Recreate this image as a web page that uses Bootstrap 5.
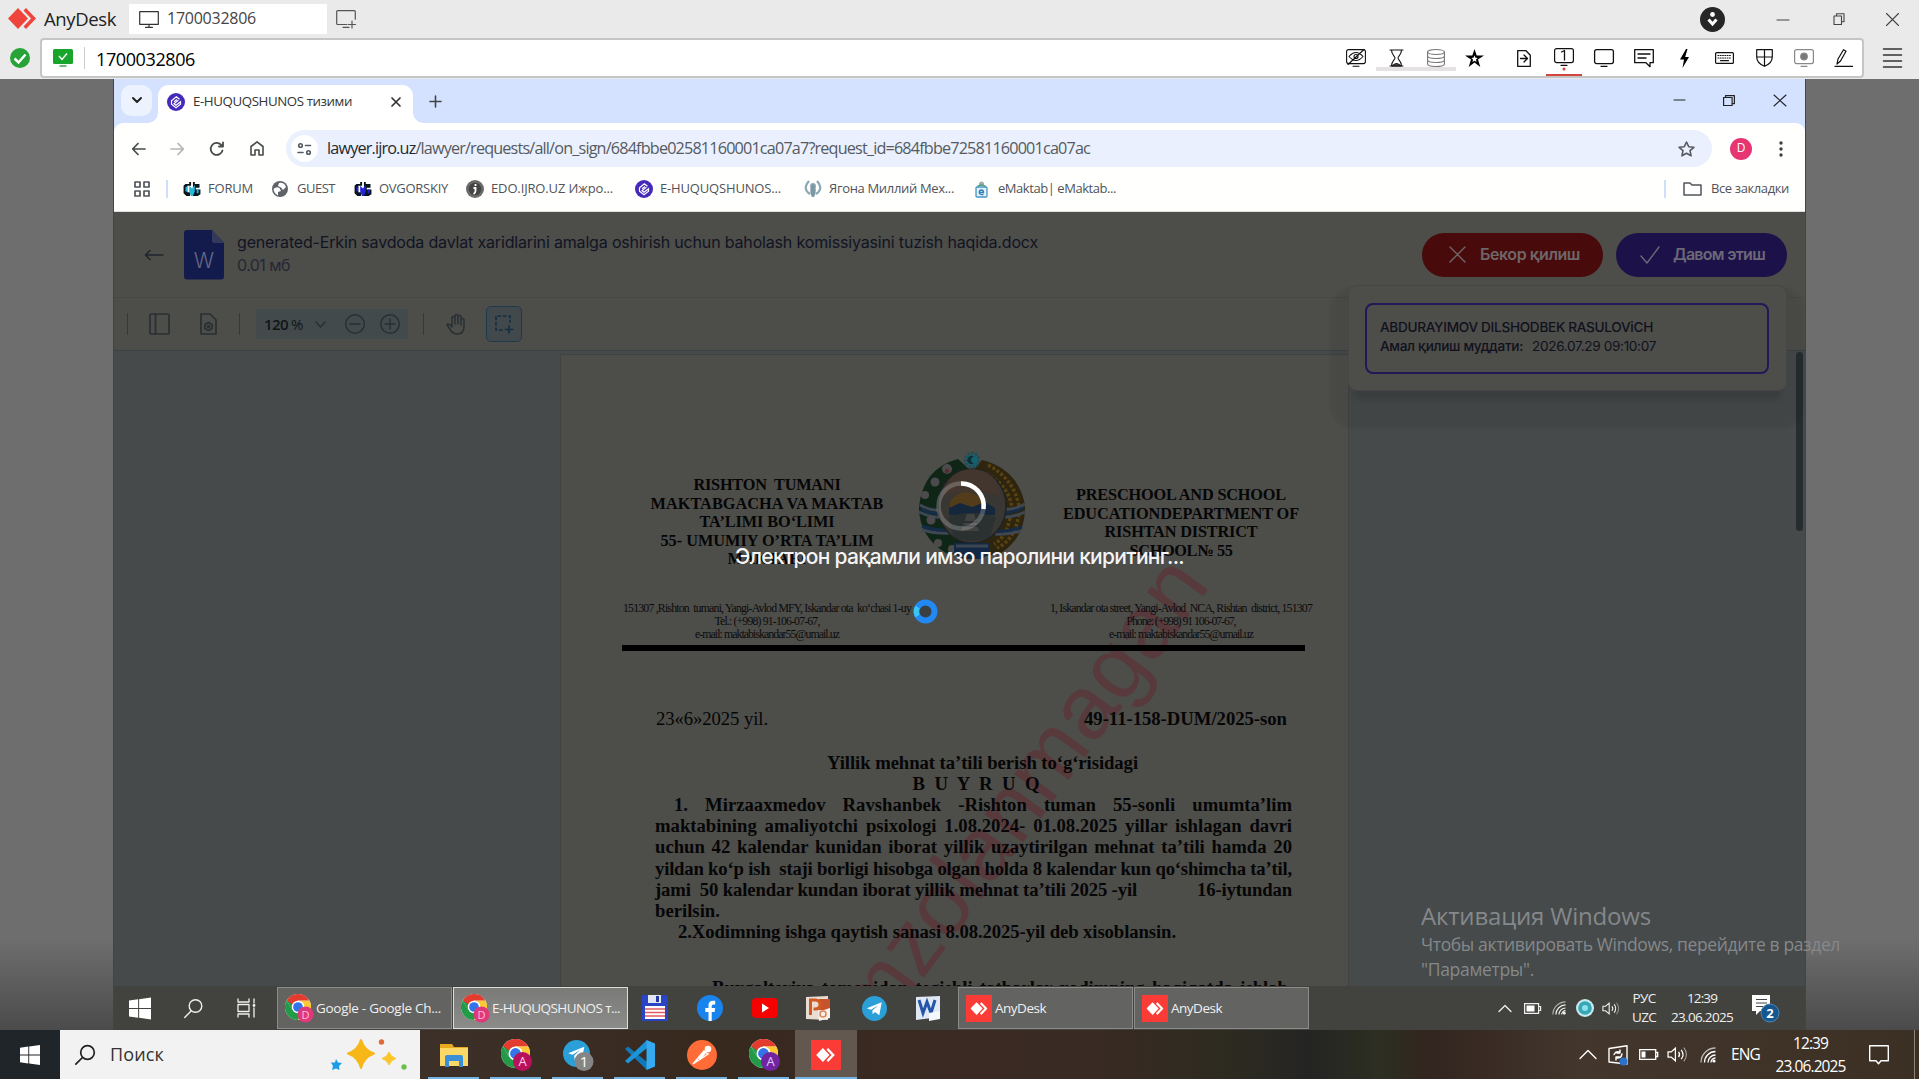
<!DOCTYPE html>
<html lang="ru">
<head>
<meta charset="utf-8">
<meta name="viewport" content="width=device-width, initial-scale=1">
<title>AnyDesk – 1700032806</title>
<link href="https://cdn.jsdelivr.net/npm/bootstrap@5.3.0/dist/css/bootstrap.min.css" rel="stylesheet">
<style>
html,body{height:100%;overflow:hidden}
body{font-family:"Open Sans","Noto Sans",sans-serif;background:#6e6e6e;color:#222;line-height:1.2}
svg{display:block;flex:none;overflow:visible}
.ln{fill:none;stroke:currentColor;stroke-linecap:round;stroke-linejoin:round}
[data-w]{white-space:pre;display:inline-block;flex:none}
.slot{display:flex;align-items:center;justify-content:center;flex:none}
/* AnyDesk window */
.ad-title{height:38px;background:#eaeaea}
.ad-name{font-size:18.5px;font-weight:500;color:#222}
.ad-tab{width:198px;height:30px;margin-left:13px;background:#fff;font-size:16px;color:#444}
.ad-bar{height:41px;background:#eaeaea;padding-bottom:1px}
.ad-field{width:1824px;height:40px;background:#fff;border:2px solid #c4c5c7;border-radius:4px}
.ad-id{font-size:18px;color:#000}
.ad-field .slot{width:40px;height:38px;position:relative;color:#111}
.vline{width:1px;flex:none}
.busy-strip::after{content:"";position:absolute;left:0;right:0;top:28px;height:4px;background:#e6e2e4}
.on-strip::after{content:"";position:absolute;left:2px;right:2px;bottom:1px;height:2px;background:#d3453d}
/* remote screen */
.stage{height:951px;background:linear-gradient(#6e6e6e 0,#6e6e6e 860px,#4b4b4b 951px)}
.remote{width:1693px;margin-left:113px;height:951px;border-left:1px solid #444;border-right:1px solid #444;position:relative;overflow:hidden}
.tabstrip{height:44px;background:#d5e2ff;padding:6px 0 0 7px}
.tab-drop{width:31px;height:31px;border-radius:10px;background:#ecf2fe}
.tab-page{width:255px;height:38px;border-radius:11px 11px 0 0;background:#fff;margin-left:6px;padding-left:9px;font-size:13.300px;color:#333;position:relative}
.tab-page::after,.tab-page::before{content:"";position:absolute;bottom:0;width:10px;height:10px}
.tab-page::after{right:-10px;background:radial-gradient(circle at 100% 0,transparent 9.5px,#fff 10px)}
.tab-page::before{left:-10px;background:radial-gradient(circle at 0 0,transparent 9.5px,#fff 10px)}
.chrome-wrap{background:#d5e2ff}
.chrome-top{background:#fffffd;border-radius:9px 9px 0 0;height:89px;color:#474b4c;border-bottom:1px solid #ddd}
.nav-row{height:51px;padding-left:4px}
.omni{width:1426px;height:37px;border-radius:19px;background:#ebf0fe;padding-left:5px;font-size:16.200px;color:#555b60}
.omni b{font-weight:400;color:#25292c}
.site-info{width:27px;height:27px;border-radius:50%;background:#fff}
.avatar-d{width:22px;height:22px;border-radius:50%;background:#e73574;color:#fff;font-size:12px}
.bm-row{height:30px;font-size:13px;color:#50545a;gap:19px}
.bm-row .bm-wide{width:151px}
.bm-ic{width:25px}
/* dimmed page */
.pagehead{height:86px;background:#4d4d4a;border-bottom:1px solid #474744;font-family:Inter,sans-serif}
.file-name{font-size:16px;color:#111422}
.file-size{font-size:16px;color:#252834}
.pill{height:44px;border-radius:22px;font-size:16px;font-weight:600;color:#6e6669}
.pill-no{width:181px;background:#480a0b;margin-right:13px;padding-left:27px}
.pill-ok{width:171px;background:#1c1148;margin-right:18px;padding-left:25px;color:#6c6878}
.ptools{height:53px;background:#4d4d4a;border-bottom:1px solid #3f4242;color:#283034;font-family:"Open Sans",sans-serif}
.ptools .vline{height:22px;background:#373a3a}
.zoombox{width:152px;height:30px;background:#434a4c;margin-left:16px;border-radius:3px;font-size:15px}
.zoombox span{color:#101518}
.sel-on{width:36px;height:36px;background:#41494d;border:1px solid #1d3a4e;border-radius:5px;color:#142e40}
.viewer{height:635px;background:#464a4b;overflow:hidden;position:relative}
.sheet{width:789px;height:1113px;margin:3px 0 0 446px;background:#4d4d4a;border:solid #414343;border-width:1px 1px 0;padding:121px 0 0 61px;font-family:"Liberation Serif",serif;color:#060606;position:relative}
.viewer .thumb{position:absolute;right:2px;top:1px;width:7px;height:179px;border-radius:4px;background:#262d2f}
.wmark{position:absolute;left:451px;top:450px;transform:translate(-50%,-50%) rotate(-53.8deg);font:90px/1 "Liberation Sans",sans-serif;color:#6a1e2a;opacity:.4;white-space:nowrap}
.lh-l{width:290px}.lh-m{width:120px}.lh-r{width:298px}
.lh{font-size:16.300px;line-height:18.500px;font-weight:700;height:126px}
.adr{font-size:11.800px;line-height:12.800px;color:#0c0c0c}
.bar-line{width:683px;height:6px;background:#000;margin:5px 0 57px}
.txt{width:637px;margin-left:33px;font-size:18.700px;line-height:21.200px}
.jl{text-align:justify;text-align-last:justify;height:21.200px;white-space:nowrap}
.certs{position:absolute;left:1234px;top:206px;width:439px;height:106px;background:#4d4d4a;border:1px solid #464648;border-radius:9px;padding:17px 16px;font-family:Inter,sans-serif;box-shadow:0 14px 5px -6px rgba(0,0,0,.12),0 20px 3px 18px rgba(0,0,0,.055)}
.cert{width:404px;height:71px;border:2px solid #211858;border-radius:8px;padding:13px 13px;font-size:13.600px;line-height:19px;color:#10111c;font-weight:500}
.busy{position:absolute;left:0;right:0;top:402px;font:500 21px/28px Inter,sans-serif;color:#fff}
.busy svg{margin-left:3px}
.ptr{position:absolute;left:799px;top:520px}
.winact{position:absolute;left:1421px;top:900px;color:#85888a;font-size:17.500px;line-height:25px}
.winact .big{font-size:24px;line-height:32px}
/* taskbars */
.rtask{height:44px;background:#42423f;color:#f0f0f0;font-size:13.500px}
.tbtn{height:42px;border:1px solid #8b8b89;background:#636361;padding-left:7px}
.tbtn.cur{background:linear-gradient(#7a7a78,#8b8b89);border-color:#dcdcda}
.htask{height:49px;background:linear-gradient(90deg,#3c3028 420px,#38291f 700px,#3a2a24 1080px,#2d2b20 1230px,#242423 1310px,#2c2f21 1380px,#33251f 1430px,#43362d 1580px,#3c3024 1919px);color:#fff;font-size:15.500px}
.hstart{width:60px;height:49px;background:#20252a}
.hsearch{width:360px;height:49px;background:#f2f2f2;color:#333;font-size:18px;padding-left:15px}
.hitem{width:62px;height:49px;position:relative}
.hitem::after{content:"";position:absolute;left:5px;right:6px;bottom:0;height:2px;background:#76b4e4}
.hitem.cur{background:#63584f}.hitem.cur::after{left:0;right:0}
</style>
<script src="https://cdn.jsdelivr.net/npm/bootstrap@5.3.0/dist/js/bootstrap.bundle.min.js"></script>
</head>
<body>
<svg width="0" height="0" class="position-absolute">
<defs>
<symbol id="adlogo" viewBox="0 0 28 21"><path d="M10 0l10 10.500-10 10.500L0 10.500z"/><path d="M15.500 2.500L18 0l10 10.500L18 21l-2.500-2.500 7.600-8z"/></symbol>
<symbol id="win" viewBox="0 0 20 20"><path d="M0 2.800L8.300 1.600v8H0zM9.200 1.500L20 0v9.600H9.200zM0 10.400h8.300v8L0 17.200zM9.200 10.400H20V20L9.200 18.500z"/></symbol>
<symbol id="chrome" viewBox="0 0 30 30"><circle cx="15" cy="15" r="15" fill="#fff"/><path d="M2 7.500A15 15 0 0 0 15 30l6.500-11.500H8.500z" fill="#229a48"/><path d="M28 7.500A15 15 0 0 1 15 30l6.500-11.200V11L15 7.500z" fill="#fcc934"/><path d="M2 7.500l6.500 11.200L15 8z" fill="#229a48"/><path d="M2 7.500A15 15 0 0 1 28 7.500H15L8.600 12z" fill="#e33b2e"/><circle cx="15" cy="15" r="7.200" fill="#fff"/><circle cx="15" cy="15" r="5.600" fill="#3574e8"/></symbol>
<symbol id="tg" viewBox="0 0 26 26"><circle cx="13" cy="13" r="13" fill="#2a9fd8"/><path d="M5 12.800L20.500 6.500 18 20l-4.500-3.300-2.400 2.300-.3-4 6-5.500-7.500 4.700z" fill="#fff"/></symbol>
<symbol id="wifi" viewBox="0 0 16 16"><g fill="none" stroke="currentColor" stroke-width="1.300"><path d="M1 15.500A14.500 14.500 0 0 1 15.500 1" opacity=".65"/><path d="M4.500 15.500a11 11 0 0 1 11-11M8 15.500a7.500 7.500 0 0 1 7.500-7.500M11 15.500a4.500 4.500 0 0 1 4.500-4.500"/></g><circle cx="14" cy="14" r="1.600" fill="currentColor"/></symbol>
<symbol id="snd" viewBox="0 0 20 16"><path d="M1 5.500h3L8 2v12l-4-3.500H1zM11 5.500q2 2.500 0 5M13.500 3.500q3.500 4.500 0 9" fill="none" stroke="currentColor" stroke-width="1.200"/><path d="M16 1.500q5 6.500 0 13" fill="none" stroke="currentColor" opacity=".55"/></symbol>
<symbol id="ehuq" viewBox="0 0 18 18"><circle cx="9" cy="9" r="9" fill="#4429ba"/><path d="M12.500 6.300L9.300 3.800 4.500 7.700v3.600L9 14.700l4.500-3.600V8.800L9 12.300 7 10.700l4.500-3.600M7 8.700l3-2.300" fill="none" stroke="#fff" stroke-width="1.200"/></symbol>
<symbol id="cyb" viewBox="0 0 18 16"><path d="M2 2h4V0h2v4H4v7h3v4H3l-3-3V4zM10 0h2v2h5v4h-4v2h5v5l-3 2h-5z" fill="#06141c"/><path d="M6 4l3 3 3-4v7l-2 5H8l-2-5zM14 8h2v4h-2zM2 5h2v5H2z" fill="currentColor"/></symbol>
</defs>
</svg>

<header class="ad-title d-flex align-items-center">
  <svg width="28" height="21" fill="#ef443b" style="margin-left:8px;margin-right:8px;margin-bottom:1px"><use href="#adlogo"/></svg>
  <span class="ad-name" data-w="72">AnyDesk</span>
  <div class="ad-tab d-flex align-items-center">
    <svg class="ln ms-2 me-2" style="padding-left:2px;box-sizing:content-box" width="20" height="17" viewBox="0 0 20 17" stroke-width="1.200" color="#333"><path d="M.7.700h18.600v12.600H.7zM10 13.500v2.500M6.500 16.300h7"/></svg>
    <span data-w="89">1700032806</span>
  </div>
  <svg class="ln" style="margin-left:9px" width="21" height="19" viewBox="0 0 21 19" stroke-width="1.200" color="#555"><path d="M11 14.500H1.700a1 1 0 0 1-1-1V1.700a1 1 0 0 1 1-1h16.600a1 1 0 0 1 1 1v7.500M7 17.300h6M16 11v7M12.500 14.500h7"/></svg>
  <div class="ms-auto d-flex align-items-center" style="padding-right:20px">
    <svg width="25" height="25" viewBox="0 0 25 25"><circle cx="12.500" cy="12.500" r="12.500" fill="#262626"/><circle cx="12.500" cy="7.500" r="2.400" fill="#fff"/><path d="M8.500 12.500l4 4.500 4-4.500" fill="none" stroke="#fff" stroke-width="3"/></svg>
    <svg class="ln" style="margin-left:52px" width="12" height="12" stroke-width="1.200" color="#444"><path d="M0 7h12"/></svg>
    <svg class="ln" style="margin-left:44px" width="12" height="12" stroke-width="1.100" color="#444"><path d="M1 3h7.500v8.500H1zM3.500 3V.7H11v8H8.500"/></svg>
    <svg class="ln" style="margin-left:41px" width="13" height="13" stroke-width="1.100" color="#444"><path d="M.5.500l12 12M12.500.500l-12 12"/></svg>
  </div>
</header>

<div class="ad-bar d-flex align-items-center">
  <div class="slot" style="width:40px"><svg width="20" height="20" viewBox="0 0 20 20"><circle cx="10" cy="10" r="10" fill="#27a338"/><path d="M4.500 10.500l4 4 7-8" fill="none" stroke="#fff" stroke-width="2.500"/></svg></div>
  <div class="ad-field d-flex align-items-center">
    <svg style="margin-left:11px" width="20" height="18" viewBox="0 0 20 18"><rect width="20" height="15" rx="1.500" fill="#17a62b"/><path d="M6 7l3 3.500 5-6" fill="none" stroke="#fff" stroke-width="1.400"/><path d="M6.500 17h7" stroke="#3aa548" stroke-width="1.500"/></svg>
    <span class="vline" style="height:22px;background:#ccc;margin:0 11px"></span>
    <span class="ad-id pt-1" data-w="99">1700032806</span>
    <div class="ms-auto d-flex" style="margin-right:-2px">
      <div class="slot"><svg class="ln" width="20" height="18" stroke-width="1.100"><rect x=".6" y=".6" width="18.800" height="14" rx="2"/><path d="M7 17.300h6M3 7.500q7-8 14 0-7 8-14 0zM2 15.500L18 .5"/><circle cx="10" cy="7.500" r="2"/></svg></div>
      <div class="slot busy-strip"><svg class="ln" width="13" height="18" stroke-width="1.100" style="z-index:1"><path d="M0 1h13M0 17h13M1.500 1c0 5 3.500 6 3.500 8s-3.500 3-3.500 8M11.500 1C11.500 6 8 7 8 9s3.500 3 3.500 8"/><path d="M2 17q4.500-5 9 0z" fill="#444"/></svg></div>
      <div class="slot busy-strip" style="color:#777"><svg class="ln" width="18" height="18" stroke-width="1.100" style="z-index:1"><ellipse cx="9" cy="3" rx="8.400" ry="2.500"/><path d="M.6 3v12c0 3.300 16.800 3.300 16.800 0V3M.6 7c0 3.300 16.800 3.300 16.800 0M.6 11c0 3.300 16.800 3.300 16.800 0"/></svg></div>
      <div class="slot" style="width:36px"><svg width="19" height="18" viewBox="0 0 19 18"><path d="M9.500 0l2.200 6.500H19l-6 4 2.300 7.500-5.800-4.500L3.700 18 6 10.500l-6-4h7.300z" fill="#000"/><path d="M9.500 6.500l1 2.300 2.200.2-1.700 1.600.5 2.300-2-1.200-2 1.200.5-2.300L6.300 9l2.200-.2z" fill="#fff"/></svg></div>
      <div class="slot" style="width:52px;padding-left:12px"><svg class="ln" width="14" height="17" stroke-width="1.300"><path d="M.7.700H9l4.300 4.600v11H.7zM3.500 8.500H10M7 5l3.500 3.500L7 12"/></svg></div>
      <div class="slot on-strip"><svg width="20" height="24" viewBox="0 -1 20 24"><rect x=".6" y="1.600" width="18.800" height="14" rx="2" class="ln" stroke-width="1.200"/><path d="M7.500 5l3-1.500V13M7 18.300h6" class="ln" stroke-width="1.300"/><circle cx="10" cy="22" r="1.500" fill="#d3453d"/></svg></div>
      <div class="slot"><svg class="ln" width="20" height="18" stroke-width="1.300"><rect x=".6" y=".6" width="18.800" height="14" rx="2"/><path d="M7 17.300h6"/></svg></div>
      <div class="slot"><svg class="ln" width="20" height="18" stroke-width="1.300"><path d="M.7.700h18.600v13H16v4l-4-4H.7zM4 5h12M4 9h8"/></svg></div>
      <div class="slot"><svg width="11" height="19" viewBox="0 0 11 19"><path d="M7 0L1 10.500h4L3.500 19 10 8H6.200L8.500 0z"/></svg></div>
      <div class="slot"><svg class="ln" width="19" height="12" stroke-width="1.200"><rect x=".6" y=".6" width="17.800" height="10.800" rx="1"/><path d="M3 3.500h13M3 6h13" stroke-dasharray=".8 1.500" /><path d="M5.500 8.700h8"/></svg></div>
      <div class="slot"><svg class="ln" width="17" height="18" stroke-width="1.200"><path d="M.7.700h15.600v7c0 5-4 8-7.800 9.600C4.700 15.700.7 12.700.7 7.700zM8.500.7v16.600M.7 8h15.600"/></svg></div>
      <div class="slot" style="color:#888"><svg class="ln" width="20" height="18" stroke-width="1.200"><rect x=".6" y=".6" width="18.800" height="14" rx="2"/><circle cx="10" cy="7.500" r="3.300" fill="#777"/><path d="M7 17.300h6"/></svg></div>
      <div class="slot"><svg class="ln" width="18" height="18" stroke-width="1.200"><path d="M0 17.400h17.500"/><path d="M2 15l1-5L8.500.700l2.500 1.600L5.500 12z"/></svg></div>
    </div>
  </div>
  <svg class="ln" style="margin-left:19px" width="19" height="20" stroke-width="1.500" color="#333"><path d="M.5 1h18M.5 7h18M.5 13h18M.5 19h18"/></svg>
</div>

<div class="stage">
<div class="remote">
  <div class="tabstrip d-flex">
    <div class="tab-drop slot"><svg class="ln" width="8" height="5" stroke-width="2" color="#222"><path d="M0 0l4 4 4-4"/></svg></div>
    <div class="tab-page d-flex align-items-center pb-1">
      <svg width="18" height="18"><use href="#ehuq"/></svg>
      <span style="margin-left:8px" data-w="159">E-HUQUQSHUNOS тизими</span>
      <svg class="ln" style="margin-left:40px" width="8" height="8" stroke-width="1.700"><path d="M0 0l8 8M8 0L0 8"/></svg>
    </div>
    <svg class="ln" style="margin:11px 0 0 17px" width="11" height="11" stroke-width="1.600" color="#444"><path d="M5.500 0v11M0 5.500h11"/></svg>
    <div class="d-flex ms-auto" style="padding:10px 19px 0 0;color:#222">
      <svg class="ln" style="margin-right:38px" width="11" height="11" stroke-width="1.100"><path d="M0 5h11"/></svg>
      <svg class="ln" style="margin-right:39px" width="12" height="11" stroke-width="1.200"><path d="M.6 2.500h8.500v8H.6zM2.500 2.500V.6h8.900v8H9"/></svg>
      <svg class="ln" width="12" height="11" stroke-width="1.100"><path d="M0 0l12 11M12 0L0 11"/></svg>
    </div>
  </div>
  <div class="chrome-wrap"><div class="chrome-top">
    <div class="nav-row d-flex align-items-center">
      <div class="slot" style="width:40px"><svg class="ln" width="13" height="12" stroke-width="1.700"><path d="M13 6H1M6 .5L.7 6 6 11.500"/></svg></div>
      <div class="slot" style="width:39px;color:#b3b6b8"><svg class="ln" width="13" height="12" stroke-width="1.700"><path d="M0 6h12M7 .5L12.300 6 7 11.500"/></svg></div>
      <div class="slot" style="width:40px"><svg class="ln" width="14" height="14" stroke-width="1.800"><path d="M12.500 8.500A6 6 0 1 1 11 2.700L13 4.500M13 .5v4H9"/></svg></div>
      <div class="slot" style="width:40px"><svg class="ln" width="14" height="15" stroke-width="1.600"><path d="M1 5.500L7 .9l6 4.600V14H9V9H5v5H1z"/></svg></div>
      <div class="omni d-flex align-items-center" style="margin-left:9px">
        <div class="site-info slot"><svg class="ln" width="13" height="12" stroke-width="1.600"><circle cx="2.500" cy="2.500" r="1.800"/><path d="M7.500 2.500h5M0 9.500h5"/><circle cx="10.500" cy="9.500" r="1.800"/></svg></div>
        <span style="margin-left:9px" data-w="763"><b>lawyer.ijro.uz</b>/lawyer/requests/all/on_sign/684fbbe02581160001ca07a7?request_id=684fbbe72581160001ca07ac</span>
        <svg class="ln ms-auto" style="margin-right:17px" width="17" height="16" viewBox="0 0 17 16" stroke-width="1.600"><path d="M8.500 1l2.200 4.700 5.200.6-3.900 3.400 1.100 5.100-4.600-2.600-4.600 2.600L5 9.700 1.100 6.300l5.200-.6z"/></svg>
      </div>
      <div class="avatar-d slot" style="margin-left:18px">D</div>
      <svg style="margin-left:27px" width="4" height="18" fill="#3c4043"><circle cx="2" cy="3" r="1.700"/><circle cx="2" cy="9" r="1.700"/><circle cx="2" cy="15" r="1.700"/></svg>
    </div>
    <div class="bm-row d-flex align-items-center">
      <div class="d-flex align-items-center" style="margin-left:20px;width:31px;margin-right:-1px">
        <svg class="ln" width="16" height="16" stroke-width="1.700"><path d="M1 1h5v5H1zM10 1h5v5h-5zM1 10h5v5H1zM10 10h5v5h-5z"/></svg>
        <span class="vline ms-auto" style="width:2px;margin-right:-3px;height:18px;background:#cfdffa"></span>
      </div>
      <div class="d-flex align-items-center"><span class="bm-ic"><svg width="18" height="15" color="#25b8dc"><use href="#cyb"/></svg></span><span data-w="45">FORUM</span></div>
      <div class="d-flex align-items-center"><span class="bm-ic"><svg width="16" height="16"><circle cx="8" cy="8" r="8" fill="#5f6368"/><path d="M1.500 8q3-3 6-1l1.500 3-3 1v3.500Q2 12.500 1.500 8zM7 2q5-1 7 4l-3 3-2-2.500L6 5z" fill="#fff"/></svg></span><span data-w="38">GUEST</span></div>
      <div class="d-flex align-items-center"><span class="bm-ic"><svg width="18" height="15" color="#2422d8"><use href="#cyb"/></svg></span><span data-w="69">OVGORSKIY</span></div>
      <div class="d-flex align-items-center bm-wide" style="margin-left:-1px"><span class="bm-ic"><svg width="18" height="18"><circle cx="9" cy="9" r="9" fill="#6a6a6a"/><circle cx="9" cy="9" r="6.300" fill="#444"/><path d="M9.500 4v2M7.500 8H9.500v3q0 2-2 3" stroke="#fff" stroke-width="1.800" fill="none"/></svg></span><span data-w="122">EDO.IJRO.UZ Ижро...</span></div>
      <div class="d-flex align-items-center bm-wide" style="margin-left:-1px"><span class="bm-ic"><svg width="18" height="18"><use href="#ehuq"/></svg></span><span data-w="121">E-HUQUQSHUNOS...</span></div>
      <div class="d-flex align-items-center bm-wide"><span class="bm-ic" style="width:24px"><svg width="16" height="18"><path d="M4 1Q-3 9 5 14M12 1q7 8-1 13" fill="none" stroke="#88a8b4" stroke-width="2.200"/><circle cx="8" cy="6" r="3" fill="#9ab"/><path d="M8 3q5 7 1 14H7Q3 10 8 3z" fill="#7d98a5"/></svg></span><span data-w="125">Ягона Миллий Мех...</span></div>
      <div class="d-flex align-items-center"><span class="bm-ic" style="width:23px"><svg width="13" height="17"><rect x="1" y="6" width="11" height="10" rx="1" fill="#e2f1fa" stroke="#4895c6" stroke-width="1.300"/><circle cx="6.500" cy="3" r="2.500" fill="#9fb0a0"/><path d="M2.500 5.500q4-3 8 0" stroke="#4e9c8a" stroke-width="1.600" fill="none"/><path d="M4.500 11.500h4q0-2.500-2-2.500-2.200 0-2.200 2.500T8.500 13.500" fill="none" stroke="#2f7fc0" stroke-width="1.300"/></svg></span><span data-w="118">eMaktab| eMaktab...</span></div>
      <div class="ms-auto d-flex align-items-center" style="margin-right:16px">
        <span class="vline" style="width:2px;height:18px;background:#cfdffa;margin-right:17px"></span>
        <svg class="ln" style="margin-right:9px" width="19" height="14" stroke-width="1.500"><path d="M1 1h6l2 2h9v10H1z"/></svg><span data-w="78">Все закладки</span>
      </div>
    </div>
  </div></div>

  <div class="pagehead d-flex align-items-center">
    <svg class="ln" style="margin-left:31px" width="18" height="10" stroke-width="1.500" color="#20242c"><path d="M18 5H1M5 .5L.5 5 5 9.500"/></svg>
    <svg style="margin-left:21px" width="40" height="50" viewBox="0 0 40 50"><path d="M3 0h25l12 13v33.500a3 3 0 0 1-3 3H3a3 3 0 0 1-3-3V3a3 3 0 0 1 3-3z" fill="#131b4d"/><path d="M28 0l12 13H30a2 2 0 0 1-2-2z" fill="#343a5b"/><text x="20" y="38" text-anchor="middle" font-family="Inter" font-size="21" font-weight="300" fill="#646883">W</text></svg>
    <div class="d-flex flex-column align-items-start" style="margin-left:13px;gap:4px;padding-bottom:1px">
      <span class="file-name" data-w="801">generated-Erkin savdoda davlat xaridlarini amalga oshirish uchun baholash komissiyasini tuzish haqida.docx</span>
      <span class="file-size" data-w="53">0.01 мб</span>
    </div>
    <div class="ms-auto pill pill-no d-flex align-items-center"><svg class="ln" width="17" height="15" stroke-width="1.400"><path d="M1 0l15 15M16 0L1 15"/></svg><span style="margin-left:14px" data-w="100">Бекор қилиш</span></div>
    <div class="pill pill-ok d-flex align-items-center"><svg class="ln" width="18" height="16" stroke-width="1.400"><path d="M0 9l6 7L18 0"/></svg><span style="margin-left:14px" data-w="92">Давом этиш</span></div>
  </div>
  <div class="ptools d-flex align-items-center">
    <span class="vline" style="margin-left:13px"></span>
    <svg class="ln" style="margin-left:21px" width="21" height="20" stroke-width="1.700"><rect x="1" y="0" width="19" height="20" rx="1"/><path d="M6.500 0v20"/></svg>
    <svg class="ln" style="margin-left:30px" width="17" height="20" stroke-width="1.700"><path d="M1 0h9l6 6v14H1zM8.500 8.500l3.500 2v4l-3.500 2-3.500-2v-4z"/><circle cx="8.500" cy="12.500" r="1"/></svg>
    <span class="vline" style="margin-left:22px"></span>
    <div class="zoombox d-flex align-items-center">
      <span style="margin-left:8px;font-weight:600" data-w="24">120</span><span style="margin-left:3px" data-w="12">%</span>
      <svg class="ln" style="margin-left:13px" width="9" height="5" stroke-width="1.400"><path d="M0 0l4.500 5L9 0"/></svg>
      <svg class="ln" style="margin-left:20px" width="20" height="20" stroke-width="1.500"><circle cx="10" cy="10" r="9.300"/><path d="M5 10h10"/></svg>
      <svg class="ln" style="margin-left:15px" width="20" height="20" stroke-width="1.500"><circle cx="10" cy="10" r="9.300"/><path d="M5 10h10M10 5v10"/></svg>
    </div>
    <span class="vline" style="margin-left:15px"></span>
    <svg class="ln" style="margin-left:22px" width="20" height="21" stroke-width="1.500"><path d="M6 13V3.500q1.500-2 3 0V10M9 9V1.500q1.500-2 3 0V10M12 9V2.500q1.500-2 3 0V11M15 10V5.500q1.500-2 3 0V12q0 8-6.500 8Q7 20 4.500 16L1 11q1-2.500 5 2"/></svg>
    <div class="sel-on slot" style="margin-left:20px"><svg class="ln" width="20" height="20" stroke-width="1.700"><path d="M8 16H2V2h14v6" stroke-dasharray="2.500 3"/><path d="M15 12v7M11.500 15.500h7"/></svg></div>
  </div>

  <div class="viewer">
    <article class="sheet">
      <div class="wmark">Imzolanmagan</div>
      <div class="d-flex lh text-center position-relative">
        <div class="lh-l d-flex flex-column align-items-center"><span data-w="147">RISHTON  TUMANI</span><span data-w="233">MAKTABGACHA VA MAKTAB</span><span data-w="135">TA’LIMI BO‘LIMI</span><span data-w="213">55- UMUMIY O’RTA TA’LIM</span><span data-w="79">MAKTABI</span></div>
        <div class="lh-m d-flex justify-content-center">
          <svg style="margin-top:-24px" width="108" height="110" viewBox="0 0 108 110">
            <path d="M40 7Q5 16 1 55q0 30 27 46l26 6V20z" fill="#0f2617"/>
            <path d="M64 8q36 9 43 45 1 32-24 48l-29 6V20z" fill="#2e250f"/>
            <path d="M70 13q26 14 31 41M68 21q24 14 26 36M101 62q-4 26-22 34M92 66q-4 20-16 26" fill="none" stroke="#594212" stroke-width="3.500" stroke-dasharray="3 2"/>
            <path d="M2 53q10 6 20 5M1 60q13 6 24 5M4 78q14 4 28 3M107 52q-10 6-20 5M107 60q-13 6-24 5M103 79q-14 4-26 3" fill="none" stroke="#3e4753" stroke-width="3"/>
            <path d="M3 57q10 5 20 5M105 56q-10 5-20 5M4 74q14 5 28 4M104 75q-14 5-26 4" fill="none" stroke="#152c49" stroke-width="3"/>
            <g fill="#4d4a4d"><circle cx="29" cy="17" r="5"/><circle cx="17" cy="30" r="4.500"/><circle cx="7" cy="43" r="4"/><circle cx="13" cy="68" r="4.500"/><circle cx="20" cy="91" r="4"/><circle cx="34" cy="97" r="4"/></g>
            <circle cx="29" cy="19" r="2" fill="#59262a"/>
            <ellipse cx="54" cy="54" rx="34" ry="37" fill="#383734" stroke="#202224" stroke-width="1.500"/>
            <path d="M25 44q4-26 29-27 25 1 29 27-29-8-58 0z" fill="#43362e"/>
            <path d="M32 50q14-20 36 0v9H32z" fill="#523c1a"/>
            <path d="M31 56l11-5 12 4 13-5 10 6v7H31z" fill="#14273c"/>
            <path d="M30 65q24-8 48 0l-6 20q-18 8-36 0z" fill="#2b3131"/>
            <path d="M49 62h7l5 17H43z" fill="#424240"/><path d="M46 70h14M45 74h16" stroke="#242a2c" stroke-width="1.500"/>
            <path d="M36 91h36v9l-8 7H44l-8-7z" fill="#122844"/><path d="M38 94h32" stroke="#3c4650" stroke-width="3"/>
            <circle cx="54" cy="8" r="7" fill="none" stroke="#13515f" stroke-width="2.500" stroke-dasharray="2.500 1.500"/><circle cx="54" cy="8" r="5.500" fill="#12616f"/><path d="M56 5a4 4 0 1 0 0 6 3 3 0 0 1 0-6z" fill="#102e36"/>
          </svg>
        </div>
        <div class="lh-r d-flex flex-column align-items-center" style="padding-top:10px"><span data-w="210">PRESCHOOL AND SCHOOL</span><span data-w="236">EDUCATIONDEPARTMENT OF</span><span data-w="153">RISHTAN DISTRICT</span><span data-w="103">SCHOOL№ 55</span></div>
      </div>
      <div class="d-flex adr position-relative">
        <div class="lh-l d-flex flex-column align-items-center"><span data-w="288">151307 ,Rishton  tumani, Yangi-Avlod MFY, Iskandar ota  ko‘chasi 1-uy</span><span data-w="105">Tel.: (+998) 91-106-07-67,</span><span data-w="144">e-mail: maktabiskandar55@umail.uz</span></div>
        <div class="lh-m"></div>
        <div class="lh-r d-flex flex-column align-items-center"><span data-w="262">1, Iskandar ota street, Yangi-Avlod  NCA, Rishtan  district, 151307</span><span data-w="109">Phone: (+998) 91 106-07-67,</span><span data-w="144">e-mail: maktabiskandar55@umail.uz</span></div>
      </div>
      <div class="bar-line position-relative"></div>
      <div class="txt position-relative">
        <div class="d-flex justify-content-between" style="margin-bottom:22px;padding:0 5px 0 1px"><span data-w="112">23«6»2025 yil.</span><b data-w="203">49-11-158-DUM/2025-son</b></div>
        <div class="fw-bold">
          <div class="text-center" style="padding-left:18px"><span data-w="311">Yillik mehnat ta’tili berish to‘g‘risidagi</span></div>
          <div class="text-center" style="padding-left:5px"><span data-w="127">B  U  Y  R  U  Q</span></div>
          <div class="jl" style="padding-left:19px">1. Mirzaaxmedov Ravshanbek -Rishton tuman 55-sonli umumta’lim</div>
          <div class="jl">maktabining amaliyotchi psixologi 1.08.2024- 01.08.2025 yillar ishlagan davri</div>
          <div class="jl">uchun 42 kalendar kunidan iborat yillik uzaytirilgan mehnat ta’tili hamda 20</div>
          <div class="jl"><span data-w="637">yildan ko‘p ish  staji borligi hisobga olgan holda 8 kalendar kun qo‘shimcha ta’til,</span></div>
          <div class="d-flex justify-content-between"><span data-w="482">jami  50 kalendar kundan iborat yillik mehnat ta’tili 2025 -yil</span><span data-w="95">16-iytundan</span></div>
          <div>berilsin.</div>
          <div style="padding-left:23px;margin-bottom:35px"><span data-w="498">2.Xodimning ishga qaytish sanasi 8.08.2025-yil deb xisoblansin.</span></div>
          <div class="jl" style="padding-left:57px;padding-right:4px">Buxgalteriya tomonidan tegishli tatbarlar xodimning haqiqatda ishlab</div>
        </div>
      </div>
    </article>
    <span class="thumb"></span>
  </div>

  <div class="rtask d-flex align-items-center">
    <svg style="margin-left:15px" width="22" height="23" fill="#fff"><use href="#win"/></svg>
    <svg class="ln" style="margin-left:33px" width="19" height="19" stroke-width="1.400"><circle cx="11.500" cy="7" r="6.300"/><path d="M7 12L.7 18.500"/></svg>
    <svg class="ln" style="margin-left:34px" width="19" height="18" stroke-width="1.300"><path d="M1 0v3h11V0M1 18v-3h11v3M1 5.500h11v7H1zM17 0v4M17 9v9"/><circle cx="17" cy="6.500" r=".8"/></svg>
    <div class="tbtn d-flex align-items-center" style="margin-left:21px;width:175px">
      <svg width="29" height="29" viewBox="0 0 29 29"><use href="#chrome" width="26" height="26"/><circle cx="20.500" cy="20.500" r="8" fill="#e0397a"/><text x="20.500" y="24.500" text-anchor="middle" font-size="11" fill="#fbd">D</text></svg>
      <span style="margin-left:2px" data-w="125">Google - Google Ch...</span></div>
    <div class="tbtn cur d-flex align-items-center" style="margin-left:1px;width:175px">
      <svg width="29" height="29" viewBox="0 0 29 29"><use href="#chrome" width="26" height="26"/><circle cx="20.500" cy="20.500" r="8" fill="#e0397a"/><text x="20.500" y="24.500" text-anchor="middle" font-size="11" fill="#fbd">D</text></svg>
      <span style="margin-left:2px" data-w="128">E-HUQUQSHUNOS т...</span></div>
    <svg style="margin-left:14px" width="26" height="26"><path d="M0 0h24l2 2v24H0z" fill="#2a44c4"/><rect x="6" width="13" height="8" fill="#dfe6f2"/><rect x="14" y="1" width="3" height="6" fill="#2438a0"/><rect x="3" y="11" width="20" height="13" fill="#fff"/><path d="M3 14h20M3 17.500h20M3 21h20" stroke="#e05a60" stroke-width="1.300"/></svg>
    <svg style="margin-left:29px" width="26" height="26"><circle cx="13" cy="13" r="13" fill="#1a84ee"/><path d="M11.500 26v-9H8.300v-4h3.200v-2.700q0-4.500 4.500-4.500h2.200v3.600h-1.800q-1.700 0-1.700 1.700V13h3.500l-.6 4h-2.900v9z" fill="#fff"/></svg>
    <svg style="margin-left:29px" width="26" height="20"><rect width="26" height="20" rx="4" fill="#f60000"/><path d="M10 5.500l7 4.500-7 4.500z" fill="#fff"/></svg>
    <svg style="margin-left:28px" width="25" height="25"><path d="M0 1l22-1v24L0 23z" fill="#e9dcd3"/><path d="M13 3h11v11H13z" fill="#c8522c"/><path d="M4.500 19V4H9q5 0 5 4.500T9 13H7.500" fill="none" stroke="#d25a22" stroke-width="3"/><path d="M12 16l12-4v10l-11 3z" fill="#f8efe8"/><circle cx="17" cy="18" r="3" fill="none" stroke="#d88860" stroke-width="1.500"/></svg>
    <svg style="margin-left:31px" width="25" height="25"><use href="#tg"/></svg>
    <svg style="margin-left:29px" width="25" height="25"><path d="M0 1l24-1v21L0 24z" fill="#dfe8f4"/><path d="M3 4l4 13 4-11 4 11 4-13" fill="none" stroke="#2454a8" stroke-width="3"/><path d="M13 17l11-2v8l-11 2z" fill="#f4f8fd"/></svg>
    <div class="tbtn d-flex align-items-center" style="margin-left:17px;width:175px"><svg width="26" height="27" viewBox="0 0 26 27"><path d="M0 0h26v27H0z" fill="#fb3c36"/><use href="#adlogo" x="4.500" y="7" width="17" height="13" fill="#fff"/></svg><span style="margin-left:3px" data-w="51">AnyDesk</span></div>
    <div class="tbtn d-flex align-items-center" style="margin-left:1px;width:175px"><svg width="26" height="27" viewBox="0 0 26 27"><path d="M0 0h26v27H0z" fill="#fb3c36"/><use href="#adlogo" x="4.500" y="7" width="17" height="13" fill="#fff"/></svg><span style="margin-left:3px" data-w="51">AnyDesk</span></div>
    <div class="ms-auto d-flex align-items-center" style="padding-right:26px">
      <svg class="ln" width="12" height="7" stroke-width="1.300"><path d="M0 6.500l6-6 6 6"/></svg>
      <svg style="margin-left:13px" width="17" height="11"><path d="M.6.600h14v9.800h-14zM14.600 3.500h2v4h-2z" fill="none" stroke="#eee" stroke-width="1.200"/><path d="M2.500 2.500h8v6h-8z" fill="#fff"/></svg>
      <svg style="margin-left:11px" width="14" height="14"><use href="#wifi"/></svg>
      <svg style="margin-left:10px" width="18" height="18"><circle cx="9" cy="9" r="9" fill="#c7e9ee"/><circle cx="9" cy="9" r="6.800" fill="#35a8b8"/><circle cx="9" cy="9" r="3" fill="#8fe0ea"/></svg>
      <svg style="margin-left:8px" width="18" height="15"><use href="#snd"/></svg>
      <div class="text-center" style="margin-left:12px;line-height:19px;width:24px"><span data-w="23">РУС</span><span data-w="24">UZC</span></div>
      <div class="text-center" style="margin-left:15px;line-height:19px;width:62px"><span data-w="30">12:39</span><span data-w="62">23.06.2025</span></div>
      <svg style="margin-left:19px" width="27" height="28" viewBox="0 0 27 28"><path d="M0 1h18v16H8l-4 4v-4H0z" fill="#fff"/><path d="M4 5.500h11M4 9h11M4 12.500h7" stroke="#444" stroke-width="1.200"/><circle cx="18" cy="19" r="9" fill="#16578f" stroke="#4c87b8"/><text x="18" y="23.500" text-anchor="middle" font-size="13" font-weight="700" fill="#fff">2</text></svg>
    </div>
  </div>

  <div class="certs"><div class="cert"><div><span data-w="273">ABDURAYIMOV DILSHODBEK RASULOViCH</span></div><div class="d-flex"><span data-w="143">Амал қилиш муддати:</span><span style="margin-left:9px;font-weight:400" data-w="124">2026.07.29 09:10:07</span></div></div></div>
  <div class="busy d-flex flex-column align-items-center">
    <svg width="50" height="50" viewBox="0 0 50 50" fill="none" stroke-width="4.500"><circle cx="25" cy="25" r="22.500" stroke="#fff" opacity=".22"/><path d="M25 2.500A22.500 22.500 0 0 1 47.500 28" stroke="#fff"/></svg>
    <span class="mt-2" style="padding-top:4px;color:#f4f4f4"><span data-w="449">Электрон рақамли имзо паролини киритинг...</span></span>
  </div>
  <svg class="ptr" width="25" height="25" viewBox="0 0 25 25"><circle cx="12.500" cy="12.500" r="9" fill="#3a3f42" stroke="#2289f2" stroke-width="6"/><path d="M4.500 17a9 9 0 0 1 0-9" fill="none" stroke="#38c6f6" stroke-width="5"/></svg>
</div>
</div>
<div class="winact"><div class="big"><span data-w="230">Активация Windows</span></div><div><span data-w="419">Чтобы активировать Windows, перейдите в раздел</span></div><div><span data-w="113">"Параметры".</span></div></div>

<footer class="htask d-flex align-items-center">
  <div class="hstart slot"><svg width="20" height="20" fill="#fff"><use href="#win"/></svg></div>
  <div class="hsearch d-flex align-items-center">
    <svg class="ln" width="20" height="20" stroke-width="1.700" color="#222"><circle cx="12.500" cy="7.500" r="6.800"/><path d="M7.500 12.500L.8 19.200"/></svg>
    <span style="margin-left:15px" data-w="54">Поиск</span>
    <svg class="ms-auto" style="margin-right:13px" width="76" height="32" viewBox="0 0 76 32"><path d="M30 1q3 10 13 13.500Q33 18 30 29q-3-11-13-14.500Q27 11 30 1z" fill="#f7b718" stroke="#f7b718" stroke-width="2" stroke-linejoin="round"/><path d="M58 13q1.500 5 7 6.500-5.500 1.500-7 6.500-1.500-5-7-6.500 5.500-1.500 7-6.500z" fill="#fbc62c" stroke="#fbc62c"/><path d="M5 20l2 3.500 4 .5-3 3 .5 4L5 29.500 1 31l1-4-2-3.500 4 0z" fill="#1c9ce6"/><circle cx="50.500" cy="3" r="2.700" fill="#e06a38"/><circle cx="73" cy="28" r="2.700" fill="#6cc04a"/></svg>
  </div>
  <div class="hitem slot" style="margin-left:3px"><svg width="28" height="24"><path d="M0 1h12l2 3h14v19H0z" fill="#e8a820"/><path d="M0 5h28v18H0z" fill="#fbd766"/><path d="M5 14q0-2 2-2h14q2 0 2 2v10h-4v-6H9v6H5z" fill="#3b8fd6"/></svg></div>
  <div class="hitem slot"><svg width="31" height="32" viewBox="0 0 31 32"><use href="#chrome" width="29" height="29"/><circle cx="21.500" cy="22.500" r="9.500" fill="#b8115c"/><text x="21.500" y="27" text-anchor="middle" font-size="13" fill="#fce">A</text></svg></div>
  <div class="hitem slot"><svg width="30" height="32" viewBox="0 0 30 32"><use href="#tg" y="1" width="27" height="27"/><circle cx="21" cy="22.500" r="9.500" fill="#858585"/><text x="21" y="27.500" text-anchor="middle" font-size="15" fill="#fff">1</text></svg></div>
  <div class="hitem slot"><svg width="30" height="30" viewBox="0 0 30 30"><path d="M0 9l3-2.500L22 22v8z" fill="#1378b8"/><path d="M0 21l3 2.500L22 8V0z" fill="#1d93d8"/><path d="M21.500 0L30 3.500v23L21.500 30z" fill="#35aaf0"/></svg></div>
  <div class="hitem slot"><svg width="30" height="30" viewBox="0 0 30 30"><circle cx="15" cy="15" r="15" fill="#ff6c37"/><path d="M6 24L17 11l4 3z" fill="none" stroke="#fff" stroke-width="1.500"/><circle cx="21" cy="9" r="3.300" fill="#fff"/><path d="M12 19l6-7" stroke="#fff" stroke-width="3"/></svg></div>
  <div class="hitem slot"><svg width="31" height="32" viewBox="0 0 31 32"><use href="#chrome" width="29" height="29"/><circle cx="21.500" cy="22.500" r="9.500" fill="#7124a0"/><text x="21.500" y="27" text-anchor="middle" font-size="13" fill="#dcf">A</text></svg></div>
  <div class="hitem cur slot"><svg width="30" height="30" viewBox="0 0 30 30"><path d="M0 0h30v30H0z" fill="#fb3c36"/><use href="#adlogo" x="5" y="8" width="19" height="14" fill="#fff"/></svg></div>
  <div class="ms-auto d-flex align-items-center">
    <svg class="ln" width="16" height="9" stroke-width="1.400"><path d="M0 8.500l8-8 8 8"/></svg>
    <svg class="ln" style="margin-left:12px" width="20" height="20" stroke-width="1.400"><path d="M1 3.500L19 .7V19L1 17zM6 9.500q2-4 6-2M14 9q-1 5-6 4M12 5v3H9M8 15v-3h3"/><circle cx="15.500" cy="16.500" r="4" fill="#2a72cc" stroke="none"/></svg>
    <svg style="margin-left:11px" width="19" height="11"><path d="M.7.700h16v9.600h-16zM16.700 3.500h2v4h-2z" fill="none" stroke="#fff" stroke-width="1.300"/><path d="M2.500 2.500h4v6h-4z" fill="#fff"/></svg>
    <svg style="margin-left:9px" width="21" height="17"><use href="#snd"/></svg>
    <svg style="margin-left:12px" width="16" height="16"><use href="#wifi"/></svg>
    <span style="margin-left:15px" data-w="29">ENG</span>
    <div class="text-center" style="margin-left:15px;line-height:23px;width:71px"><span data-w="35">12:39</span><span data-w="70">23.06.2025</span></div>
    <svg class="ln" style="margin-left:23px" width="20" height="20" stroke-width="1.400"><path d="M.7.700h18.600v15H12l-2.500 3-2.500-3H.7z"/></svg>
    <span class="vline" style="height:49px;background:#8a857f;margin:0 4px 0 25px"></span>
  </div>
</footer>
<script>
// Interface labels keep a fixed advance width whatever sans/serif face is available
document.querySelectorAll('[data-w]').forEach(function (el) {
  var want = parseFloat(el.dataset.w), n = el.textContent.length;
  var have = el.getBoundingClientRect().width;
  el.style.letterSpacing = ((want - have) / n).toFixed(3) + 'px';
});
</script>
</body>
</html>
